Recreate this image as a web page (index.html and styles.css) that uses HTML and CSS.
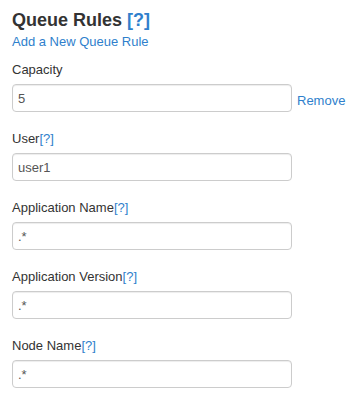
FILE: index.html
```html
<!DOCTYPE html>
<html lang="en">
<head>
  <meta charset="UTF-8" />
  <title>Queue Rules</title>
  <link rel="stylesheet" href="styles.css">
</head>
<body>
  <div class="panel">
    <h4 class="title">Queue Rules <a href="#" class="help">[?]</a></h4>
    <a href="#" class="add-link">Add a New Queue Rule</a>
    <form class="rules">
      <div class="field">
        <label for="capacity">Capacity</label>
        <div class="row">
          <input type="text" id="capacity" value="5">
          <a href="#" class="remove">Remove</a>
        </div>
      </div>
      <div class="field">
        <label for="user">User<a href="#" class="help">[?]</a></label>
        <input type="text" id="user" value="user1">
      </div>
      <div class="field">
        <label for="appName">Application Name<a href="#" class="help">[?]</a></label>
        <input type="text" id="appName" value=".*">
      </div>
      <div class="field">
        <label for="appVersion">Application Version<a href="#" class="help">[?]</a></label>
        <input type="text" id="appVersion" value=".*">
      </div>
      <div class="field">
        <label for="nodeName">Node Name<a href="#" class="help">[?]</a></label>
        <input type="text" id="nodeName" value=".*">
      </div>
    </form>
  </div>
</body>
</html>
```

FILE: styles.css
```css
:root {
  --font-sans: 'Liberation Sans', Arial, sans-serif;
  --color-text: #333333;
  --color-link: #2f7fcc;
  --color-input-text: #555555;
  --color-border: #cccccc;
}
* { box-sizing: border-box; margin: 0; padding: 0; }
body {
  font-family: var(--font-sans);
  font-size: 13px;
  color: var(--color-text);
  background: #ffffff;
}
a { color: var(--color-link); text-decoration: none; }
.panel { padding: 9px 12px 0; }
.title { font-size: 18px; font-weight: 700; line-height: 22px; margin-bottom: 1px; }
.add-link { display: block; line-height: 20px; margin-bottom: 8px; }
.rules { display: flex; flex-direction: column; gap: 17px; }
.field { display: flex; flex-direction: column; }
.field label { font-weight: 400; line-height: 20px; margin-bottom: 4px; }
.field input {
  flex: none;
  width: 280px; height: 28px;
  padding: 0 5px;
  font-family: var(--font-sans);
  font-size: 13px;
  color: var(--color-input-text);
  border: 1px solid var(--color-border);
  border-radius: 4px;
  box-shadow: inset 0 1px 1px rgba(0,0,0,0.075);
  outline: none;
}
.row { display: flex; align-items: flex-end; gap: 5px; }
.remove { line-height: 20px; margin-bottom: 1px; white-space: nowrap; }
```
